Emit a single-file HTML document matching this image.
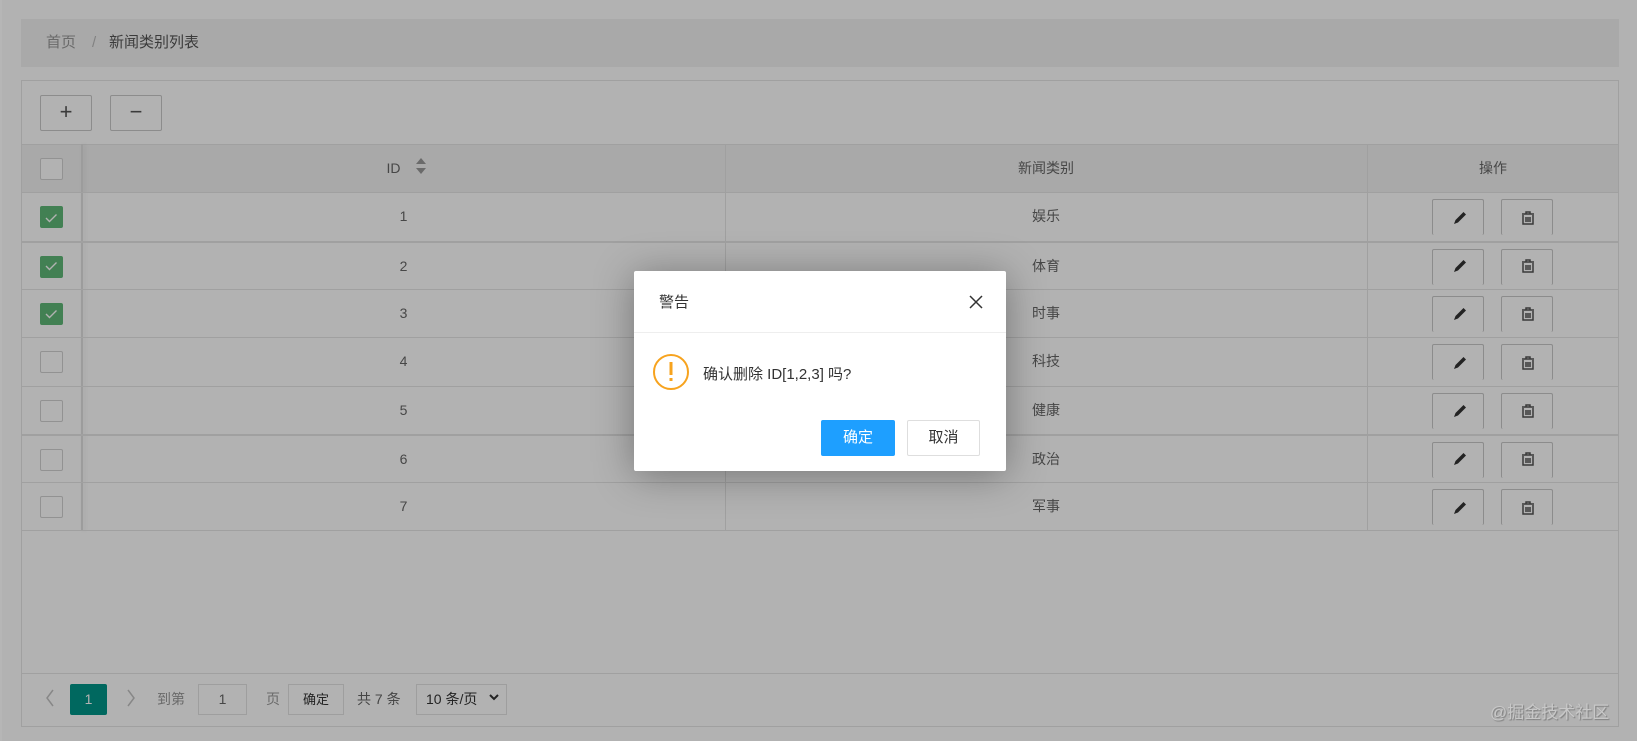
<!DOCTYPE html>
<html><head><meta charset="utf-8"><style>
*{margin:0;padding:0;box-sizing:border-box}
body{width:1637px;height:741px;overflow:hidden;background:#fff;font-family:"Liberation Sans","Noto Sans CJK SC",sans-serif;font-size:14px;color:#666;position:relative}
.abs{position:absolute}
.crumb{left:21px;top:19px;width:1598px;height:48px;background:#f2f2f2;}
.crumb span{position:absolute;top:14px;font-size:15px;line-height:20px}
.tbl{left:21px;top:80px;width:1598px;height:647px;border:1px solid #e6e6e6;background:#fff}
.tb{position:absolute;top:14px;width:52px;height:36px;border:1px solid #c9c9c9;border-radius:2px;text-align:center;line-height:32px;font-size:22px;color:#555;font-weight:300}
.row{position:absolute;left:0;width:1596px;height:48px;border-top:1px solid #e6e6e6}
.cell{position:absolute;top:0;height:100%;text-align:center;line-height:47px;color:#666;font-size:14px}
.vl{position:absolute;top:63px;width:1px;height:387px;background:#e6e6e6}
.cb{position:absolute;left:18px;top:13px;width:23px;height:22px;border:1px solid #d2d2d2;border-radius:2px;background:#fff}
.cb.on{background:#5FB878;border-color:#5FB878}
.ob{position:absolute;top:6px;width:52px;height:36px;border:1px solid #c9c9c9;border-bottom:none;border-radius:2px;background:#fff}
.overlay{left:0;top:0;width:1637px;height:741px;background:rgba(0,0,0,.3)}
.dlg{left:634px;top:271px;width:372px;height:200px;background:#fff;border-radius:2px;box-shadow:0 4px 40px rgba(0,0,0,.35)}
.pt{position:absolute;top:603px;line-height:31px}
</style></head><body>
<div class="abs crumb"><span style="left:25px;color:#999">首页</span><span style="left:71px;color:#bbb">/</span><span style="left:88px;color:#555">新闻类别列表</span></div>
<div class="abs tbl">
 <div class="tb" style="left:18px">+</div><div class="tb" style="left:88px">−</div>
 <div class="row" style="top:63px;background:#f2f2f2;height:49px">
  <div class="cb"></div>
  <div class="cell" style="left:60px;width:643px;color:#666;padding-right:20px">ID</div>
  <div class="cell" style="left:703px;width:642px">新闻类别</div>
  <div class="cell" style="left:1345px;width:252px">操作</div>
 </div>
 <div class="vl" style="left:59px;width:2px;background:#e0e0e0;box-shadow:2px 0 4px rgba(0,0,0,.08)"></div>
 <div class="vl" style="left:703px"></div><div class="vl" style="left:1345px"></div>
 <div class="row" style="top:111px"><div class="cb on"></div><div class="cell" style="left:60px;width:643px">1</div><div class="cell" style="left:703px;width:642px">娱乐</div><div class="ob" style="left:1410px"></div><div class="ob" style="left:1479px"></div></div>
 <div class="row" style="top:160px;border-top-width:2px"><div class="cb on"></div><div class="cell" style="left:60px;width:643px">2</div><div class="cell" style="left:703px;width:642px">体育</div><div class="ob" style="left:1410px"></div><div class="ob" style="left:1479px"></div></div>
 <div class="row" style="top:208px"><div class="cb on"></div><div class="cell" style="left:60px;width:643px">3</div><div class="cell" style="left:703px;width:642px">时事</div><div class="ob" style="left:1410px"></div><div class="ob" style="left:1479px"></div></div>
 <div class="row" style="top:256px"><div class="cb"></div><div class="cell" style="left:60px;width:643px">4</div><div class="cell" style="left:703px;width:642px">科技</div><div class="ob" style="left:1410px"></div><div class="ob" style="left:1479px"></div></div>
 <div class="row" style="top:305px"><div class="cb"></div><div class="cell" style="left:60px;width:643px">5</div><div class="cell" style="left:703px;width:642px">健康</div><div class="ob" style="left:1410px"></div><div class="ob" style="left:1479px"></div></div>
 <div class="row" style="top:353px;border-top-width:2px"><div class="cb"></div><div class="cell" style="left:60px;width:643px">6</div><div class="cell" style="left:703px;width:642px">政治</div><div class="ob" style="left:1410px"></div><div class="ob" style="left:1479px"></div></div>
 <div class="row" style="top:401px"><div class="cb"></div><div class="cell" style="left:60px;width:643px">7</div><div class="cell" style="left:703px;width:642px">军事</div><div class="ob" style="left:1410px"></div><div class="ob" style="left:1479px"></div></div>
 <div class="row" style="top:449px;height:1px"></div>
 <div class="row" style="top:592px;height:1px"></div>
 <div class="abs" style="left:48px;top:603px;width:37px;height:31px;background:#009688;color:#fff;text-align:center;line-height:31px;border-radius:2px">1</div>
 <div class="pt" style="left:135px;color:#999">到第</div>
 <div class="abs" style="left:176px;top:603px;width:49px;height:31px;border:1px solid #e2e2e2;text-align:center;line-height:29px;background:#fff">1</div>
 <div class="pt" style="left:244px;color:#999">页</div>
 <div class="abs" style="left:266px;top:603px;width:56px;height:31px;border:1px solid #e2e2e2;text-align:center;line-height:29px;background:#fff;color:#333;font-size:13px">确定</div>
 <div class="pt" style="left:335px;color:#666">共 7 条</div>
 <div class="abs" style="left:394px;top:603px;width:91px;height:31px;border:1px solid #e2e2e2;line-height:29px;padding-left:9px;background:#fff;color:#333">10 条/页</div>
</div>
<svg class="abs" style="left:0;top:0" width="1637" height="741">
 <g stroke="#fff" stroke-width="1.4" fill="none">
  <path d="M46 218 l3.5 3.5 l7 -7"/><path d="M46 266 l3.5 3.5 l7 -7"/><path d="M46 314 l3.5 3.5 l7 -7"/>
 </g>
 <g fill="#999"><path d="M416 164 l5 -6 l5 6z M416 168 l5 6 l5 -6z"/></g>
 <g fill="none" stroke="#c2c2c2" stroke-width="1.5">
  <path d="M53 690 l-6 8 l6 8"/><path d="M128 690 l6 8 l-6 8"/>
 </g>
 <path d="M490 695 l4 4 l4 -4" fill="none" stroke="#333" stroke-width="2"/>
 <defs>
  <g id="pen"><path d="M-5 6 l1.5 -4 l8 -8 l2.5 2.5 l-8 8z" fill="#333"/></g>
  <g id="bin" fill="none" stroke="#555" stroke-width="1.5"><path d="M-6 -4 h12 M-2 -4 v-2 h4 v2 M-5 -3 v9 h10 v-9 M-2 -1 v5 M0 -1 v5 M2 -1 v5"/></g>
 </defs>
 <use href="#pen" x="1459" y="218"/><use href="#bin" x="1528" y="218"/>
 <use href="#pen" x="1459" y="266"/><use href="#bin" x="1528" y="266"/>
 <use href="#pen" x="1459" y="314"/><use href="#bin" x="1528" y="314"/>
 <use href="#pen" x="1459" y="363"/><use href="#bin" x="1528" y="363"/>
 <use href="#pen" x="1459" y="411"/><use href="#bin" x="1528" y="411"/>
 <use href="#pen" x="1459" y="459"/><use href="#bin" x="1528" y="459"/>
 <use href="#pen" x="1459" y="508"/><use href="#bin" x="1528" y="508"/>
</svg>
<div class="abs overlay"></div>
<div class="abs" style="left:0;top:0;width:2px;height:741px;background:rgba(255,255,255,.06)"></div>
<div class="abs dlg">
 <div class="abs" style="left:25px;top:20px;font-size:15px;color:#333">警告</div>
 <svg class="abs" style="left:334px;top:23px" width="16" height="16"><path d="M2 2 L14 14 M14 2 L2 14" stroke="#333" stroke-width="1.5"/></svg>
 <div class="abs" style="left:0;top:61px;width:372px;height:1px;background:#eee"></div>
 <svg class="abs" style="left:18px;top:82px" width="40" height="40"><circle cx="19" cy="19" r="17" fill="none" stroke="#F7A31E" stroke-width="2"/><rect x="17.5" y="9" width="3" height="13" fill="#F7A31E"/><rect x="17.5" y="25" width="3" height="3" fill="#F7A31E"/></svg>
 <div class="abs" style="left:69px;top:92px;font-size:15px;color:#333">确认删除 ID[1,2,3] 吗?</div>
 <div class="abs" style="left:187px;top:149px;width:74px;height:36px;background:#1E9FFF;color:#fff;text-align:center;line-height:36px;font-size:15px;border-radius:2px">确定</div>
 <div class="abs" style="left:273px;top:149px;width:73px;height:36px;border:1px solid #dedede;color:#333;text-align:center;line-height:34px;font-size:15px;border-radius:2px">取消</div>
</div>
<div class="abs" style="left:1490px;top:698px;font-size:17px;color:#c8c8c8;text-shadow:1px 1px 1px rgba(0,0,0,.3)">@掘金技术社区</div>
</body></html>
